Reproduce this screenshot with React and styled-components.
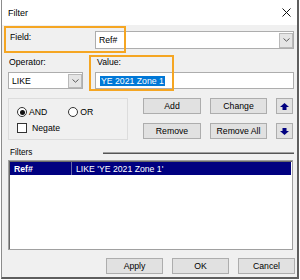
import React from 'react';
import styled, { createGlobalStyle } from 'styled-components';

const GlobalStyle = createGlobalStyle`
    html, body {
        margin: 0;
        padding: 0;
        background: #ffffff;
    }
    body {
        font-family: "Liberation Sans", Arial, sans-serif;
        font-size: 8.7px;
        color: #000;
    }
    * {
        box-sizing: border-box;
    }
`;

function CloseIcon() {
    return (
        <svg width="9" height="9" viewBox="0 0 9 9">
            <path d="M0.5 0.5 L8.5 8.5 M8.5 0.5 L0.5 8.5" stroke="#111" strokeWidth="1" fill="none" />
        </svg>
    );
}

function Chevron() {
    return (
        <svg width="7" height="4" viewBox="0 0 7 4">
            <path d="M0.5 0.5 L3.5 3.2 L6.5 0.5" stroke="#5a5a5a" strokeWidth="1" fill="none" />
        </svg>
    );
}

function Arrow({ down }) {
    return (
        <svg width="9" height="7" viewBox="0 0 9 7" style={down ? { transform: 'rotate(180deg)' } : undefined}>
            <polygon points="4.5,0 9,4 6.5,4 6.5,7 2.5,7 2.5,4 0,4" fill="#000080" />
        </svg>
    );
}

export default function App() {
    return (
        <>
            <GlobalStyle />
            <Window>
                <TitleBar>
                    <span>Filter</span>
                    <CloseIcon />
                </TitleBar>
                <Body>
                    <FieldRow>
                        <FieldLabel>Field:</FieldLabel>
                        <Combo height={18}>
                            <ComboText>Ref#</ComboText>
                            <DropButton height={15}>
                                <Chevron />
                            </DropButton>
                        </Combo>
                    </FieldRow>

                    <OperatorRow>
                        <Column>
                            <SmallLabel>Operator:</SmallLabel>
                            <Combo height={17}>
                                <ComboText>LIKE</ComboText>
                                <DropButton height={14}>
                                    <Chevron />
                                </DropButton>
                            </Combo>
                        </Column>
                        <Column grow>
                            <SmallLabel indent>Value:</SmallLabel>
                            <TextInput>
                                <Selected>YE 2021 Zone 1</Selected>
                            </TextInput>
                        </Column>
                    </OperatorRow>

                    <ActionRow>
                        <GroupBox>
                            <RadioRow>
                                <Option>
                                    <Radio checked />
                                    AND
                                </Option>
                                <Option>
                                    <Radio />
                                    OR
                                </Option>
                            </RadioRow>
                            <CheckRow>
                                <Checkbox />
                                Negate
                            </CheckRow>
                        </GroupBox>
                        <ButtonGrid>
                            <Button>Add</Button>
                            <Button>Change</Button>
                            <Button>
                                <Arrow />
                            </Button>
                            <Button>Remove</Button>
                            <Button>Remove All</Button>
                            <Button>
                                <Arrow down />
                            </Button>
                        </ButtonGrid>
                    </ActionRow>

                    <ListHeader>
                        <span>Filters</span>
                        <Rule />
                    </ListHeader>
                    <List>
                        <ListRow>
                            <Cell bold>Ref#</Cell>
                            <Cell divided>LIKE 'YE 2021 Zone 1'</Cell>
                        </ListRow>
                    </List>

                    <Footer>
                        <Button>Apply</Button>
                        <Button>OK</Button>
                        <Button>Cancel</Button>
                    </Footer>
                </Body>

                <Highlight style={{ left: 2, top: 26, width: 122, height: 27 }} />
                <Highlight style={{ left: 87, top: 55, width: 85, height: 36 }} />
            </Window>
        </>
    );
}

const Window = styled.div`
    position: relative;
    margin-left: 1px;
    width: 298px;
    background: #f0f0f0;
    border-left: 1px solid #8c8c8c;
    border-right: 2px solid #5e5e5e;
    border-bottom: 2px solid #5e5e5e;
    display: flex;
    flex-direction: column;
`;

const TitleBar = styled.div`
    height: 25px;
    background: #ffffff;
    display: flex;
    align-items: center;
    justify-content: space-between;
    padding: 0 6px 0 6px;
    font-size: 9px;
`;

const Body = styled.div`
    display: flex;
    flex-direction: column;
    padding: 6px 3px 3px 6px;
`;

const FieldRow = styled.div`
    display: flex;
    align-items: flex-start;
`;

const FieldLabel = styled.div`
    width: 87px;
    padding-left: 2px;
    line-height: 12px;
`;

const Combo = styled.div`
    flex: 1;
    height: ${p => p.height}px;
    background: #fff;
    border: 1px solid #adadad;
    display: flex;
    align-items: center;
    padding-left: 3px;
`;

const ComboText = styled.span`
    flex: 1;
`;

const DropButton = styled.div`
    width: 14px;
    height: ${p => p.height}px;
    margin-right: 0;
    background: #e5e5e5;
    border: 1px solid #b9b9b9;
    display: flex;
    align-items: center;
    justify-content: center;
`;

const OperatorRow = styled.div`
    display: flex;
    gap: 12px;
    margin-top: 8px;
`;

const Column = styled.div`
    display: flex;
    flex-direction: column;
    width: ${p => (p.grow ? 'auto' : '75px')};
    flex: ${p => (p.grow ? 1 : 'none')};
`;

const SmallLabel = styled.div`
    line-height: 11px;
    margin-bottom: 4px;
    padding-left: ${p => (p.indent ? 2 : 1)}px;
`;

const TextInput = styled.div`
    height: 17px;
    background: #fff;
    border: 1px solid #adadad;
    display: flex;
    align-items: center;
    padding-left: 4px;
`;

const Selected = styled.span`
    background: #0078d7;
    color: #fff;
    line-height: 10px;
    padding: 0 1px;
`;

const ActionRow = styled.div`
    display: flex;
    margin-top: 9px;
`;

const GroupBox = styled.div`
    width: 120px;
    height: 42px;
    border: 1px solid #dcdcdc;
    padding: 8px 0 0 8px;
    display: flex;
    flex-direction: column;
`;

const RadioRow = styled.div`
    display: flex;
    gap: 21px;
    height: 10px;
    align-items: center;
`;

const Option = styled.div`
    display: flex;
    align-items: center;
    gap: 2px;
`;

const Radio = styled.span`
    width: 10px;
    height: 10px;
    border-radius: 50%;
    border: 1px solid #333;
    background: #fff;
    display: flex;
    align-items: center;
    justify-content: center;

    &::after {
        content: '';
        width: 5px;
        height: 5px;
        border-radius: 50%;
        background: ${p => (p.checked ? '#111' : 'transparent')};
    }
`;

const CheckRow = styled.div`
    display: flex;
    align-items: center;
    gap: 5px;
    margin-top: 6px;
    height: 10px;
`;

const Checkbox = styled.span`
    width: 10px;
    height: 10px;
    border: 1px solid #333;
    background: #fff;
`;

const ButtonGrid = styled.div`
    display: grid;
    grid-template-columns: 58px 57px 17px;
    grid-auto-rows: 16px;
    column-gap: 9px;
    row-gap: 9px;
    margin-left: 15px;
`;

const Button = styled.div`
    width: ${p => p.width || 'auto'};
    height: 16px;
    background: #e1e1e1;
    border: 1px solid #adadad;
    display: flex;
    align-items: center;
    justify-content: center;
    line-height: 1;
`;

const ListHeader = styled.div`
    display: flex;
    align-items: center;
    height: 11px;
    margin-top: 7px;
    padding-left: 2px;
    font-size: 8.2px;
`;

const Rule = styled.div`
    margin-left: auto;
    width: 191px;
    height: 2px;
    border-top: 1px solid #a0a0a0;
    border-bottom: 1px solid #555;
`;

const List = styled.div`
    margin-top: 2px;
    height: 90px;
    margin-right: 1px;
    background: #fff;
    border: 1px solid #a0a0a0;
    box-shadow: inset 1px 1px 0 #696969;
    padding: 1px 1px 0 1px;
`;

const ListRow = styled.div`
    display: grid;
    grid-template-columns: 61px 1fr;
    height: 13px;
    background: #000080;
    color: #fff;
`;

const Cell = styled.div`
    display: flex;
    align-items: center;
    padding-left: 4px;
    font-weight: ${p => (p.bold ? 700 : 400)};
    border-left: ${p => (p.divided ? '1px solid #6a6aa8' : 'none')};
`;

const Footer = styled.div`
    display: grid;
    grid-template-columns: repeat(3, 57px);
    column-gap: 9px;
    justify-content: end;
    margin-top: 8px;
    margin-right: -1px;
`;

const Highlight = styled.div`
    position: absolute;
    border: 2px solid #f5a623;
    pointer-events: none;
`;
